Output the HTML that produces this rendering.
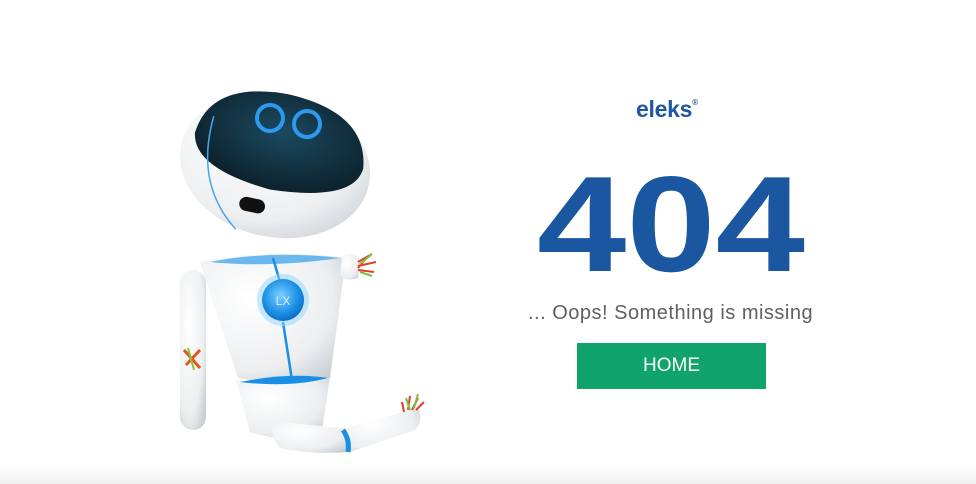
<!DOCTYPE html>
<html><head><meta charset="utf-8"><style>
html,body{margin:0;padding:0;background:#fff;width:976px;height:484px;overflow:hidden;position:relative;font-family:"Liberation Sans",sans-serif}
.eleks{position:absolute;left:636px;top:96px;font-size:23px;font-weight:bold;color:#1f57a2;letter-spacing:-0.3px}
.eleks sup{font-size:8px;vertical-align:top;position:relative;top:2px}
.oops{position:absolute;left:528px;top:302px;width:300px;font-size:20px;letter-spacing:0.5px;color:#5f6060;white-space:nowrap}
.btn{position:absolute;left:577px;top:343px;width:189px;height:46px;background:#10a46c;color:#fff;font-size:19px;text-align:center;line-height:46px}
.floor{position:absolute;left:0;top:466px;width:976px;height:18px;background:linear-gradient(#fff,#f0f0f0)}
</style></head><body>
<div class="floor"></div>
<svg width="976" height="484" style="position:absolute;left:0;top:0">
<defs>
<radialGradient id="w" cx="35%" cy="35%" r="80%"><stop offset="0" stop-color="#fff"/><stop offset="0.7" stop-color="#eceef0"/><stop offset="1" stop-color="#c9ced3"/></radialGradient>
<radialGradient id="v" cx="50%" cy="40%" r="70%"><stop offset="0" stop-color="#1b4a60"/><stop offset="1" stop-color="#0a1a24"/></radialGradient>
<radialGradient id="c" cx="45%" cy="40%" r="60%"><stop offset="0" stop-color="#7fd0ff"/><stop offset="0.7" stop-color="#1a8fe6"/><stop offset="1" stop-color="#0f6fc4"/></radialGradient>
</defs>
<rect x="180" y="270" width="26" height="160" rx="13" fill="url(#w)"/>
<path d="M184 350l16 18M186 365l14-15" stroke="#e8541e" stroke-width="3"/>
<path d="M188 348l6 22" stroke="#8fc23b" stroke-width="2"/>
<path d="M200 262 Q270 248 346 258 L330 378 Q280 386 238 378 Z" fill="url(#w)"/>
<path d="M210 262 Q270 250 340 258 Q270 268 210 262Z" fill="#48a9ef" opacity="0.8"/>
<path d="M273 258 L280 282 M283 322 L292 380" stroke="#1a8fe6" stroke-width="2.5"/>
<circle cx="283" cy="300" r="26" fill="#8fd4ff" opacity="0.5"/>
<circle cx="283" cy="300" r="21" fill="url(#c)"/>
<text x="283" y="305" text-anchor="middle" font-size="12" fill="#d8f0ff" font-family="Liberation Sans">LX</text>
<path d="M342 256 Q356 250 360 262 L358 278 Q348 282 340 276Z" fill="url(#w)"/>
<path d="M358 262l14-8M358 266l18-4M358 270l16 2M358 268l10-12" stroke="#e0402a" stroke-width="2"/>
<path d="M360 264l12-10M360 272l12 4" stroke="#7cc23f" stroke-width="2"/>
<path d="M236 380 Q280 390 330 377 L322 430 Q290 445 250 432 Z" fill="url(#w)"/>
<path d="M240 382 Q290 372 328 378 Q290 388 240 382Z" fill="#1a8fe6"/>
<path d="M275 420 Q300 425 345 428 L350 452 Q310 455 280 448 Q268 435 275 420Z" fill="url(#w)"/>
<path d="M345 428 L418 408 Q424 420 415 430 L350 452Z" fill="url(#w)"/>
<path d="M343 430 Q350 440 348 452" stroke="#1a8fe6" stroke-width="5" fill="none"/>
<path d="M408 410l2-14M412 410l6-12M416 410l8-8M404 412l-2-10" stroke="#e0402a" stroke-width="2"/>
<path d="M410 410l-4-12M414 408l4-14" stroke="#7cc23f" stroke-width="2"/>
<g transform="rotate(12 275 165)">
<ellipse cx="275" cy="165" rx="96" ry="72" fill="url(#w)"/>
<path d="M190 150 Q195 95 275 93 Q355 95 362 150 Q360 185 275 190 Q195 185 190 150Z" fill="url(#v)"/>
<path d="M205 130 Q200 200 250 236" stroke="#4aa8e8" stroke-width="1.5" fill="none"/>
<rect x="248" y="202" width="26" height="14" rx="7" fill="#111"/>
</g>
<circle cx="270" cy="118" r="13" fill="none" stroke="#2a9bf0" stroke-width="4"/>
<circle cx="307" cy="124" r="13" fill="none" stroke="#2a9bf0" stroke-width="4"/>
<text x="537" y="271" font-family="Liberation Sans" font-weight="bold" font-size="136" fill="#1b56a1" textLength="268" lengthAdjust="spacingAndGlyphs">404</text>
</svg>
<div class="eleks">eleks<sup>®</sup></div>
<div class="oops">... Oops! Something is missing</div>
<div class="btn">HOME</div>
</body></html>
